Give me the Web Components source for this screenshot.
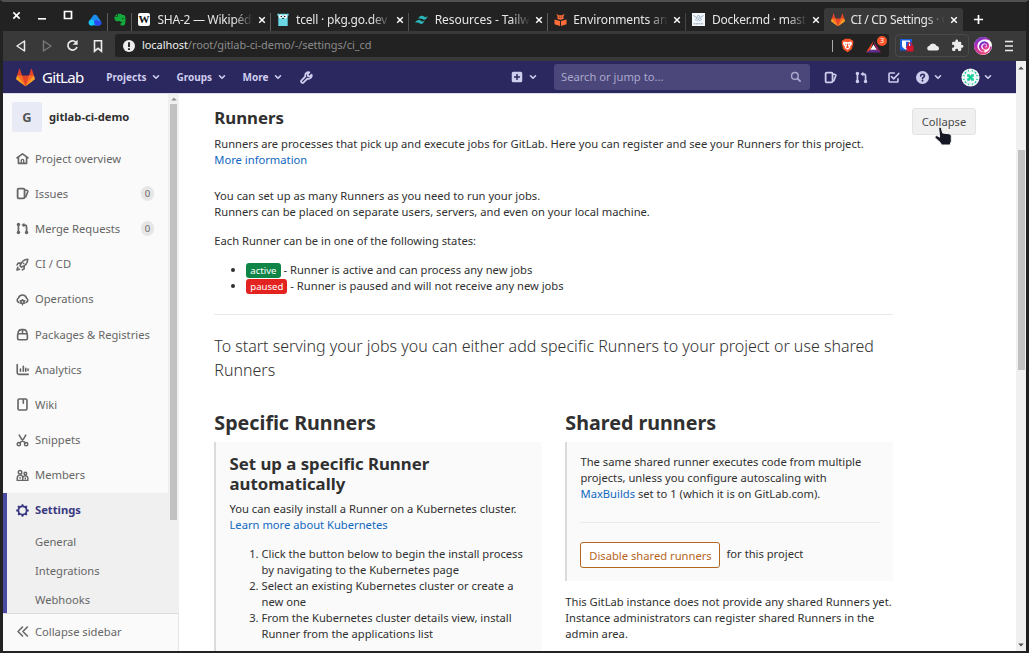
<!DOCTYPE html>
<html lang="en">
<head>
<meta charset="utf-8">
<title>CI / CD Settings · GitLab</title>
<style>
html,body{margin:0;height:100%;overflow:hidden}
body{font:11.2px/16px "Noto Sans",sans-serif;color:#303030;background:#fff}
</style>
</head>
<body>
<app-window></app-window>
<script>
const define = (name, css, html, setup) => {
  const t = document.createElement('template');
  t.innerHTML = `<style>:host,*{box-sizing:border-box}${css}</style>${html}`;
  customElements.define(name, class extends HTMLElement {
    constructor() {
      super();
      this.attachShadow({mode: 'open'}).appendChild(t.content.cloneNode(true));
    }
    connectedCallback() { if (setup) setup(this, this.shadowRoot); }
  });
};

const S = 'fill="none" stroke="currentColor" stroke-linecap="round" stroke-linejoin="round"';
const ICONS = {
  tanuki: ['0 0 36 36', `<path fill="#e24329" d="M2 14l9.38 9v-9l-4-12.28c-.205-.632-1.176-.632-1.38 0z"/><path fill="#e24329" d="M34 14l-9.38 9v-9l4-12.28c.205-.632 1.176-.632 1.38 0z"/><path fill="#e24329" d="M18 34.38 3 14h30z"/><path fill="#fc6d26" d="M18 34.38 11.38 14H2l4 11z"/><path fill="#fc6d26" d="M18 34.38 24.62 14H34l-4 11z"/><path fill="#fca326" d="M2 14L.1 20.16c-.18.565 0 1.2.5 1.56L18 34.38z"/><path fill="#fca326" d="M34 14l1.9 6.16c.18.565 0 1.2-.5 1.56L18 34.38z"/>`],
  chevron: ['0 0 16 16', `<path ${S} stroke-width="2.6" d="M4 6l4 4 4-4"/>`],
  home: ['0 0 16 16', `<path ${S} stroke-width="2" d="M1.2 7.2 8 2.2l6.800 5M3 6.500V14h10V6.500"/><path ${S} stroke-width="1.600" d="M6.500 13.500v-3a1.500 1.500 0 0 1 3 0v3"/>`],
  issues: ['0 0 16 16', `<rect ${S} stroke-width="2.200" x="2" y="2" width="8.500" height="12" rx="1.500"/><path ${S} stroke-width="2" d="M11 3.600l2.800.7a1 1 0 0 1 .8 1.300L12 12.200"/>`],
  merge: ['0 0 16 16', `<g fill="currentColor"><circle cx="3" cy="3" r="2.100"/><circle cx="3" cy="13" r="2.100"/><circle cx="13" cy="13" r="2.100"/><path d="M10.300.8v6L6.800 3.800z"/></g><path ${S} stroke-width="2.100" d="M3 3v10M9.500 3.800H11a2 2 0 0 1 2 2V13"/>`],
  rocket: ['0 0 16 16', `<path ${S} stroke-width="2" d="M5 9.500C6.500 5 10 1.800 14.500 1.600 14.300 6 11 9.800 6.700 11.200zM5.300 6.300H2.700L1.300 8.500M10 10.500v2.800l-2.300 1.300M9.300 6.700l.2-.2M2.200 11.500l-1 3.300 3-1"/>`],
  cloudgear: ['0 0 16 16', `<path ${S} stroke-width="2" d="M3.500 11.500A2.800 2.800 0 0 1 3 6.300 5.100 5.100 0 0 1 12.900 6.300a2.800 2.800 0 0 1-.4 5.200"/><circle ${S} stroke-width="2" cx="8" cy="11" r="2"/><path ${S} stroke-width="1.500" d="M8 7.800v6.900M5 9.300l6 3.400M11 9.300l-6 3.400"/><circle cx="8" cy="11" r=".9" fill="#fafafa"/>`],
  package: ['0 0 16 16', `<rect ${S} stroke-width="2" x="2" y="7" width="12" height="7.500" rx="1.500"/><path ${S} stroke-width="1.900" d="M2.500 7C2.500 4 4.500 2 7 2h2c2.500 0 4.500 2 4.500 5M8 2v4.500"/>`],
  chart: ['0 0 16 16', `<path ${S} stroke-width="2" d="M1.500 2v10a2 2 0 0 0 2 2H15M5.500 7.500V10M9 4v6M12 6.500V10M14.800 7.500V9"/>`],
  wiki: ['0 0 16 16', `<rect ${S} stroke-width="2" x="2.500" y="1.200" width="11" height="13.600" rx="1.600"/><path ${S} stroke-width="2" d="M9 2v4.500"/>`],
  snippets: ['0 0 16 16', `<g ${S} stroke-width="1.900"><circle cx="3.500" cy="12.500" r="2"/><circle cx="12.500" cy="12.500" r="2"/><path d="M4 1.300l3 5.200 4.200 4.500M12 1.300 9 6.500l-4.200 4.500"/></g>`],
  members: ['0 0 16 16', `<g ${S} stroke-width="1.800"><circle cx="5" cy="4" r="2.200"/><circle cx="11.500" cy="5.500" r="1.600"/><path d="M1.500 14v-3a3.500 3.500 0 0 1 6.800-1.200V14zM9 9.800a3 3 0 0 1 5.600 1.200v3H8.500M5 10.500v1M11.500 11v1"/></g>`],
  gear: ['0 0 16 16', `<circle ${S} stroke-width="2.100" cx="8" cy="8" r="5"/><g fill="currentColor">${[0,45,90,135,180,225,270,315].map(a=>`<path transform="rotate(${a} 8 8)" d="M6.400 2.800 6.900.6c.1-.5 2.100-.5 2.200 0l.5 2.200z"/>`).join('')}</g>`],
  collapse: ['0 0 16 16', `<path ${S} stroke-width="2" d="M8 2.500 2.500 8 8 13.500M14 2.500 8.500 8l5.500 5.500"/>`],
  wrench: ['0 0 16 16', `<path ${S} stroke-width="2.200" d="M14.300 4.600a4 4 0 0 1-5.200 4.800L4.500 14a1.800 1.800 0 0 1-2.600-2.600l4.700-4.700a4 4 0 0 1 4.900-5L9.400 4l.5 2.200 2.200.4z"/>`],
  plus: ['0 0 16 16', `<path fill="currentColor" fill-rule="evenodd" d="M3 1h10a2 2 0 0 1 2 2v10a2 2 0 0 1-2 2H3a2 2 0 0 1-2-2V3a2 2 0 0 1 2-2zm4 3v3H4v2h3v3h2V9h3V7H9V4z"/>`],
  search: ['0 0 16 16', `<circle ${S} stroke-width="2" cx="6.800" cy="6.800" r="4.600"/><path ${S} stroke-width="2.400" d="M10.500 10.500 14 14"/>`],
  todo: ['0 0 16 16', `<path ${S} stroke-width="2" d="M9 2.500H3.500a1 1 0 0 0-1 1v9a1 1 0 0 0 1 1h9a1 1 0 0 0 1-1V9.500M5.500 7l2.700 2.700L14.500 3"/>`],
  help: ['0 0 16 16', `<circle cx="8" cy="8" r="8" fill="currentColor"/><path fill="none" stroke="#2b275f" stroke-width="1.900" stroke-linecap="round" d="M5.700 6.200C5.900 3.400 10.400 3.400 10.400 6.200 10.400 8 8 7.900 8 9.400"/><circle cx="8" cy="12" r="1.100" fill="#2b275f"/>`],
  identicon: ['0 0 20 20', `<circle cx="10" cy="10" r="9.500" fill="#f4f6fb"/><g fill="#10cf95"><path d="M6.500 6.500h2.800v1.500h1.400V6.500h2.800v2.800H12v1.400h1.500v2.800h-2.800V12H9.300v1.500H6.500v-2.800H8V9.300H6.500z"/><path d="M3.500 5l2.700-1.500L4.700 6.500zM16.500 5l-2.700-1.500 1.500 3zM3.500 15l2.700 1.500-1.500-3zM16.500 15l-2.700 1.500 1.500-3zM8 1.500l1 2.300H7zM12 1.500l1 2.300h-2zM8 18.500l1-2.300H7zM12 18.500l1-2.300h-2zM1.500 8l2.300-1v2zM1.500 12l2.300-1v2zM18.500 8l-2.300-1v2zM18.500 12l-2.300-1v2z"/></g>`],
  drive: ['0 0 14 12', `<path fill="#1a8cf0" d="M7 .8c1 0 1.800.5 2.300 1.300l3.800 5.500a2.800 2.800 0 0 1-2.400 3.900H3.300A2.800 2.800 0 0 1 .9 7.600l3.800-5.500C5.200 1.300 6 .8 7 .8z"/><circle cx="3.600" cy="8.600" r="2.900" fill="#14c8f5"/><path fill="#2a49f5" d="M6 8.500a2.300 2.300 0 0 1 4-1.800l3 .8a2.700 2.700 0 0 1-2.300 4H8z"/>`],
  evernote: ['0 0 12 13', `<path fill="#12a83a" d="M4 .8h3l1 .9 2.500.5c.8.200 1 2 1 4.500 0 3.300-.5 5.500-1.700 5.900H7.700c-1 0-1.500-.9-1.300-1.800.1-.7.700-1 1.300-.9V8.800c-.8.100-1.700 0-2-.8-1.600.6-3.600.4-4.400-.6C.6 6.400.3 5 .3 4h3.200z"/><path fill="#12a83a" d="M.5 3.400 3.200.8v2.600z"/><circle cx="8.700" cy="5.600" r=".7" fill="#222"/>`],
  tailwind: ['0 0 16 12', `<path fill="#2ab5b8" d="M4 4.700Q5.500.3 9 .8c2 .3 2.800 2.300 4.500 1.800L15.800 1.200Q14 6 11 5.700C9 5.500 8 3 4 4.700zM.2 9.800Q1.700 5.400 5.200 5.900c2 .3 2.800 2.300 4.500 1.800L12 6.300Q10.200 11.100 7.200 10.800C5.200 10.600 4.200 8.100.2 9.800z"/>`],
  gopher: ['0 0 12 13', `<path fill="#6ad7e5" d="M1.300 3Q1.300.8 4 .8h4Q10.700.8 10.700 3v10H1.300z"/><circle cx="1.500" cy="1.700" r="1.200" fill="#6ad7e5"/><circle cx="10.500" cy="1.700" r="1.200" fill="#6ad7e5"/><circle cx="3.800" cy="3.500" r="2" fill="#fff"/><circle cx="8.200" cy="3.500" r="2" fill="#fff"/><circle cx="4.300" cy="3.500" r=".8" fill="#222"/><circle cx="7.700" cy="3.500" r=".8" fill="#222"/><path fill="#222" d="M5.200 5h1.600v1H5.200z"/>`],
  reader: ['0 0 13 13', `<path fill="#ff6c37" d="M.5 6.500 6 8v5L.5 11.300zM12.500 6.500 7 8v5l5.500-1.700zM3.500 5.900V3.300L2.300.8l2.400 1.500h3.600L10.700.8 9.500 3.300v2.600l-3 .9z"/><path stroke="#222" d="M5 4.200h.8M7.200 4.200H8"/>`],
  doc: ['0 0 13 13', `<path fill="#f4f7fa" d="M0 0h13v13H0z"/><path fill="none" stroke="#7d9db8" stroke-width=".8" d="M1.500 2.500l3 2 2-2.500 2 2.500 3-2M3 7l2.500-2h2L10 7M4.500 8 6 6.500 8.500 8"/><path stroke="#8fa4b8" stroke-dasharray="2 .5" d="M1.500 10.800h10"/>`],
  xmark: ['0 0 10 10', `<path fill="none" stroke="currentColor" stroke-width="1.800" d="M1.500 1.500l7 7M8.500 1.500l-7 7"/>`],
  add: ['0 0 12 12', `<path stroke="currentColor" stroke-width="1.900" d="M6 1v10M1 6h10"/>`],
  min: ['0 0 10 10', `<path stroke="currentColor" stroke-width="1.600" d="M1 8.800h8"/>`],
  max: ['0 0 10 10', `<path fill="none" stroke="currentColor" stroke-width="1.700" d="M1.500 1.500h7v7h-7z"/>`],
  back: ['0 0 12 14', `<path ${S} stroke-width="1.500" d="M9.500 2v10L2 7z"/>`],
  forward: ['0 0 12 14', `<path ${S} stroke-width="1.500" d="M2.500 2v10L10 7z"/>`],
  reload: ['0 0 14 14', `<path fill="none" stroke="currentColor" stroke-width="1.800" d="M11.800 8.500A5 5 0 1 1 10.500 3.300"/><path fill="currentColor" d="M12.500.8v5.400H7.200z"/>`],
  bookmark: ['0 0 12 14', `<path fill="none" stroke="currentColor" stroke-width="1.600" d="M2.500 1.800h7v10.400L6 9.300l-3.500 2.900z"/>`],
  info: ['0 0 12 12', `<circle cx="6" cy="6" r="6" fill="currentColor"/><path stroke="#222" stroke-width="1.900" d="M6 2.200V7M6 8.200v1.900"/>`],
  brave: ['0 0 14 16', `<path fill="#fb542b" d="M4 .7h6l1.200 1.400 1.500.2.700 2.200-.4 1 .2 1-1.700 5.500L7 15.400 2.500 12 .8 6.500l.2-1-.4-1 .7-2.200 1.500-.2z"/><path fill="#fff" d="M3 3.800l4 .7 4-.7 1 2.200-2.200 3L10 10.500 7 12.700 4 10.500 4.200 9 2 6z"/><path fill="#fb542b" d="M4 5.800l2 .5-.7 1.200zM10 5.800l-2 .5.700 1.200zM6.300 6h1.400L7.500 8.500 9 9.800 7 11 5 9.800l1.500-1.300z"/>`],
  bat: ['0 0 15 13', `<path fill="#ff4724" d="M7.500.8 0 12.500l4.500-2.800z"/><path fill="#9e1f63" d="M7.500.8 15 12.500l-4.500-2.800z"/><path fill="#662d91" d="M0 12.500h15l-4.500-2.800h-6z"/><path fill="#fff" d="M7.500 4.500l3.200 5.300H4.300z"/>`],
  bitwarden: ['0 0 14 13', `<path fill="#175ddc" d="M0 0h12v11.500H0z"/><path fill="#fff" d="M2 1.500h8v5c0 2-2 3.200-4 4.200-2-1-4-2.200-4-4.200z"/><path fill="#175ddc" d="M6 2.800h2.800v3.500C8.800 7.800 7.500 8.500 6 9.300z"/><rect x="6.500" y="6.800" width="7" height="5.700" rx=".8" fill="#d7142d"/><path fill="none" stroke="#d7142d" stroke-width="1.200" d="M8.200 7V5.600a1.800 1.800 0 0 1 3.600 0V7"/>`],
  cloud: ['0 0 14 12', `<path fill="#ececec" d="M2.600 10.500a2.300 2.300 0 0 1 .6-4.400A4 4 0 0 1 10.700 6a2.300 2.300 0 0 1 .7 4.500z"/>`],
  puzzle: ['0 0 24 24', `<path fill="#ececec" d="M20.500 11H19V7a2 2 0 0 0-2-2h-4V3.500a2.500 2.500 0 0 0-5 0V5H4a2 2 0 0 0-2 2v3.800h1.500a2.700 2.700 0 0 1 0 5.400H2V20a2 2 0 0 0 2 2h3.800v-1.500a2.700 2.700 0 0 1 5.400 0V22H17a2 2 0 0 0 2-2v-4h1.500a2.500 2.500 0 0 0 0-5z"/>`],
  swirl: ['0 0 18 18', `<defs><linearGradient id="g" x2=".5" y2="1"><stop stop-color="#5238cc"/><stop offset=".5" stop-color="#b62bb5"/><stop offset="1" stop-color="#f04a7c"/></linearGradient></defs><circle cx="9" cy="9" r="9" fill="#fff"/><path fill="url(#g)" d="M9 0a9 9 0 0 1 7.500 4C12.500 1.300 5 2 3.600 7.500 2.400 13 8 16.500 12.500 14.500 9 17.500 3.500 16.500 1.200 13.400A9 9 0 0 1 9 0z"/><path fill="none" stroke="url(#g)" stroke-width="2.200" stroke-linecap="round" d="M11.500 8.600c-1.600-.8-2.800 1.300-1.100 2.400 2 1.100 4.400-.7 3.700-3-.8-2.700-4.700-3.600-6.900-1.300-2.200 2.600-1 6.300 2.300 7.100"/><path fill="none" stroke="url(#g)" stroke-width="1.600" d="M3.500 15.200C8.500 18.800 16 16 17 9.500"/>`],
  menu: ['0 0 10 12', `<path stroke="currentColor" stroke-width="1.300" d="M1 1.500h8M1 6h8M1 10.500h8"/>`],
  pointer: ['0 0 19 20', `<path fill="#151824" stroke="#f5f5f5" stroke-width="1" stroke-linejoin="round" d="M4.700 1.800C5.300.9 7 1 7.400 2.200L8.600 7l6.200.8c1.700.3 2.600 1.300 2.500 3v4.500L16 19H7.400l-.9-2.200L1 11.700C.6 10.300 2.400 9.200 3.700 10l1.900 1.200z"/>`],
  up: ['0 0 6 4', `<path fill="currentColor" d="M3 .5 5.800 3.500H.2z"/>`],
  down: ['0 0 6 4', `<path fill="currentColor" d="M3 3.500 5.800.5H.2z"/>`]
};

define('ui-icon', ':host{display:block;flex:none}svg{display:block;width:100%;height:100%}', '<svg></svg>', (el, r) => {
  const [box, body] = ICONS[el.getAttribute('name')] || ['0 0 1 1', ''];
  const [w, h] = (el.getAttribute('size') || '13').split('x');
  el.style.width = w + 'px';
  el.style.height = (h || w) + 'px';
  const s = r.querySelector('svg');
  s.setAttribute('viewBox', box);
  s.innerHTML = body;
});

/* ---------- browser chrome ---------- */
define('browser-tab', `
:host{display:flex;align-items:center;width:138.600px;flex:none;height:23px;padding-left:6px;border-left:1px solid #5c5c5c;clip-path:inset(5px 0 0 0);color:#e6e6e6}
:host([active]){background:#393939;border-color:#393939;border-radius:3px 3px 0 0;clip-path:none}
.fav{width:19.500px;flex:none}
.t{width:96px;flex:none;white-space:nowrap;overflow:hidden;font-size:12px;line-height:18px;-webkit-mask-image:linear-gradient(90deg,#000 76px,transparent 95px);mask-image:linear-gradient(90deg,#000 76px,transparent 95px)}
.x{margin-left:4px;color:#fff}`,
`<span class="fav"><slot name="icon"></slot></span><span class="t"><slot></slot></span><ui-icon class="x" name="xmark" size="8"></ui-icon>`,
(el, r) => { const s = el.getAttribute('spacing'); if (s) r.querySelector('.t').style.letterSpacing = s + 'px'; });

define('tab-strip', `
:host{display:flex;height:29px;align-items:flex-end;background:#222;color:#fff;flex:none}
.ctl{display:flex;align-items:center;height:28px;width:85px;padding:0 0 4px 9px;gap:16px}
.pin{display:flex;align-items:center;height:23px;clip-path:inset(5px 0 0 0)}
.pin.b{border-left:1px solid #5c5c5c;width:24px;padding-left:6px}
.pin.a{width:19px}
.plus{margin:0 0 6px 10px}`,
`<div class="ctl"><ui-icon name="xmark" size="9"></ui-icon><ui-icon name="min" size="10"></ui-icon><ui-icon name="max" size="10"></ui-icon></div>
<div class="pin a"><ui-icon name="drive" size="14x12"></ui-icon></div>
<div class="pin b"><ui-icon name="evernote" size="12x13"></ui-icon></div>
<browser-tab spacing="-0.25"><wiki-mark slot="icon"></wiki-mark>SHA-2 — Wikipédia</browser-tab>
<browser-tab spacing="-0.2"><ui-icon slot="icon" name="gopher" size="12x13"></ui-icon>tcell · pkg.go.dev</browser-tab>
<browser-tab spacing="-0.05"><ui-icon slot="icon" name="tailwind" size="13x10"></ui-icon>Resources - Tailwind</browser-tab>
<browser-tab spacing="-0.1"><ui-icon slot="icon" name="reader" size="13"></ui-icon>Environments and</browser-tab>
<browser-tab spacing="-0.2"><ui-icon slot="icon" name="doc" size="13"></ui-icon>Docker.md · master</browser-tab>
<browser-tab spacing="-0.3" active><ui-icon slot="icon" name="tanuki" size="14"></ui-icon>CI / CD Settings · GitLab</browser-tab>
<ui-icon class="plus" name="add" size="11"></ui-icon>`);

define('wiki-mark', `:host{display:block;width:12px;height:13px;border-radius:2px;background:#fff;color:#111;font:bold 11px/13px "Liberation Serif",serif;overflow:hidden}span{margin-left:.5px}`, '<span>W</span>');

define('tool-bar', `
:host{display:flex;align-items:center;height:30px;background:#393939;color:#ededed;flex:none;padding:0 11px 1px 12px}
.nav{display:flex;align-items:center;width:100px;gap:14px}
.url{display:flex;align-items:center;width:774px;height:23px;border-radius:3px;background:#222;padding:0 1px 0 8px}
.addr{margin-left:7px;flex:1;font-size:11px;line-height:18px;color:#8b8b8b;white-space:nowrap;letter-spacing:-.07px;padding-bottom:1px}
.addr b{font-weight:400;color:#f0f0f0}
.sep{width:1px;height:12px;background:#aaa;margin-right:8px}
.bat{position:relative;margin-left:12px;width:22px;height:15px;padding-top:2px}
.n{position:absolute;right:1px;top:-2px;width:10px;height:10px;border-radius:5px;background:#fb542b;color:#fff;font-size:7px;line-height:10px;text-align:center}
.ext{display:flex;align-items:center;justify-content:space-between;width:74px;height:23px;border:1px solid #4a4a4a;border-radius:4px;margin:0 5px 0 6px;padding:0 4px 0 4px}
.menu{margin-left:12px}`,
`<div class="nav"><ui-icon name="back" size="12x14"></ui-icon><ui-icon name="forward" size="12x14" style="color:#777"></ui-icon><ui-icon name="reload" size="13" style="margin-left:-1px"></ui-icon><ui-icon name="bookmark" size="12x14" style="margin-left:-1px"></ui-icon></div>
<div class="url"><ui-icon name="info" size="12"></ui-icon><span class="addr"><b>localhost</b>/root/gitlab-ci-demo/-/settings/ci_cd</span><i class="sep"></i><ui-icon name="brave" size="13x15"></ui-icon><span class="bat"><ui-icon name="bat" size="15x13"></ui-icon><span class="n">3</span></span></div>
<div class="ext"><ui-icon name="bitwarden" size="14x13"></ui-icon><ui-icon name="cloud" size="14x12"></ui-icon><ui-icon name="puzzle" size="13"></ui-icon></div>
<ui-icon name="swirl" size="18"></ui-icon><ui-icon class="menu" name="menu" size="10x12"></ui-icon>`);

/* ---------- GitLab header ---------- */
define('gl-header', `
:host{display:flex;align-items:center;height:33px;flex:none;background:#2b275f;border-bottom:1px solid #dcdcec;color:#cfcdee;padding:0 16px 0 13px}
.brand{font-size:15px;line-height:20px;color:#fff;margin-left:7px;width:64.300px;flex:none;letter-spacing:-.7px}
.item{display:flex;flex:none;align-items:center;font-weight:700;font-size:10px}
.item ui-icon{margin-left:4.500px}
.search{display:flex;flex:none;align-items:center;justify-content:space-between;width:256px;height:26px;border-radius:3px;background:#4b477a;color:#aaa8cc;padding:0 8px 0 7px;font-size:11.200px}`,
`<ui-icon name="tanuki" size="19"></ui-icon><span class="brand">GitLab</span>
<span class="item" style="width:70.200px"><span>Projects</span><ui-icon name="chevron" size="10"></ui-icon></span>
<span class="item" style="width:66px"><span>Groups</span><ui-icon name="chevron" size="10"></ui-icon></span>
<span class="item" style="width:57.500px"><span>More</span><ui-icon name="chevron" size="10"></ui-icon></span>
<ui-icon name="wrench" size="13"></ui-icon>
<ui-icon name="plus" size="12" style="margin-left:198px"></ui-icon><ui-icon name="chevron" size="10" style="margin-left:5px"></ui-icon>
<div class="search" style="margin-left:16px"><span>Search or jump to...</span><ui-icon name="search" size="11.500"></ui-icon></div>
<ui-icon name="issues" size="13" style="margin-left:14px"></ui-icon>
<ui-icon name="merge" size="13" style="margin-left:18px"></ui-icon>
<ui-icon name="todo" size="13" style="margin-left:19px"></ui-icon>
<ui-icon name="help" size="13" style="margin-left:16px"></ui-icon><ui-icon name="chevron" size="10" style="margin-left:4px"></ui-icon>
<ui-icon name="identicon" size="19" style="margin-left:18px"></ui-icon><ui-icon name="chevron" size="10" style="margin-left:3.500px"></ui-icon>`);

/* ---------- sidebar ---------- */
define('nav-item', `
:host{display:flex;align-items:center;height:35.200px;padding:0 14px 0 13px;color:#666}
.l{margin-left:6px;flex:1;white-space:nowrap}
.badge{width:13px;height:15px;border-radius:7px;background:#e6e6e6;font-size:9.600px;line-height:15px;text-align:center;color:#666}
:host([active]){color:#393982;font-weight:700;padding-left:9px}
[hidden]{display:none}`,
`<ui-icon></ui-icon><span class="l"><slot></slot></span><span class="badge" hidden></span>`,
(el, r) => {
  const i = document.createElement('ui-icon');
  i.setAttribute('name', el.getAttribute('icon'));
  i.setAttribute('size', '13');
  r.querySelector('ui-icon').replaceWith(i);
  const c = el.getAttribute('count');
  if (c !== null) { const b = r.querySelector('.badge'); b.textContent = c; b.hidden = false; }
});

define('side-bar', `
:host{display:flex;flex-direction:column;width:176px;flex:none;background:#fafafa;height:557px}
.scroll{display:flex;height:519px;overflow:hidden}
.list{flex:1;min-width:0;padding-top:7px}
.proj{display:flex;align-items:center;height:31px;padding-left:9px;font-weight:700;margin-bottom:9px}
.proj i{font-style:normal;width:30px;height:30px;border-radius:2px;background:#e8eaf6;color:#555;text-align:center;line-height:30px;font-size:12.800px;margin-right:7px}
.bar{width:11px;background:#f0f0f0;display:flex;flex-direction:column;align-items:center;padding-top:3px;color:#8e8e8e}
.thumb{width:7px;height:416px;background:#c1c1c1;margin-top:3px}
.open{background:#f0f0f0;border-left:4px solid #4b4ba3;height:121px}
.sub{height:29px;line-height:29px;padding-left:28px;color:#666}
.sub:nth-child(2){margin-top:-1.500px}
.foot{display:flex;align-items:center;height:38px;border-top:1px solid #dbdbdb;border-right:1px solid #e5e5e5;padding:0 0 2px 13px;color:#666}
.foot span{margin-left:6px}`,
`<div class="scroll"><div class="list">
<div class="proj"><i>G</i><span>gitlab-ci-demo</span></div>
<nav-item icon="home">Project overview</nav-item>
<nav-item icon="issues" count="0">Issues</nav-item>
<nav-item icon="merge" count="0">Merge Requests</nav-item>
<nav-item icon="rocket">CI / CD</nav-item>
<nav-item icon="cloudgear">Operations</nav-item>
<nav-item icon="package">Packages &amp; Registries</nav-item>
<nav-item icon="chart">Analytics</nav-item>
<nav-item icon="wiki">Wiki</nav-item>
<nav-item icon="snippets">Snippets</nav-item>
<nav-item icon="members">Members</nav-item>
<div class="open"><nav-item icon="gear" active>Settings</nav-item>
<div class="sub">General</div><div class="sub">Integrations</div><div class="sub">Webhooks</div></div>
</div><div class="bar"><ui-icon name="up" size="6x4"></ui-icon><div class="thumb"></div></div></div>
<div class="foot"><ui-icon name="collapse" size="13"></ui-icon><span>Collapse sidebar</span></div>`);

/* ---------- page content ---------- */
define('state-badge', `:host{display:inline-block;height:15px;border-radius:3px;padding:0 4px;background:#108548;color:#fff;font-size:9.600px;line-height:15px;vertical-align:baseline}:host([kind=paused]){background:#e2231f}`, '<slot></slot>');

define('runner-panel', `:host{display:block;background:#fafafa;border-left:2px solid #dbdbdb;padding:12px 13px 13px 13.200px}`, '<slot></slot>');

define('runner-settings', `
:host{display:flex;flex:1;min-width:0;height:557px;overflow:hidden;padding:14px 40px 0 35.300px;justify-content:space-between;align-items:flex-start}
.main{width:679px;flex:none}
h2,h3,h4,p,ul,ol{margin:0}
h4{font-size:16.800px;line-height:20px;font-weight:700}
h3{font-size:19.700px;line-height:24px;font-weight:700;margin-bottom:7px}
a{color:#1068bf;text-decoration:none}
ul,ol{padding-left:32px}
ul li{height:16px}
.lead{font-size:16px;line-height:24px;font-weight:300;margin-bottom:29px}
hr{border:0;border-top:1px solid #eaeaea;margin:20px 0 19px}
.cols{display:grid;grid-template-columns:328px 328px;column-gap:23px}
.btn{position:relative;width:64px;height:27px;border:1px solid #e3e3e3;border-radius:3px;background:#f0f0f0;color:#4a4a4a;text-align:center;line-height:26px;flex:none}
.cur{position:absolute;left:21px;top:17px}
.act{display:flex;align-items:flex-start;gap:6px}
.warn{width:140px;height:26px;border:1px solid #b5651d;border-radius:3px;background:#fff;color:#b5651d;text-align:center;line-height:26px}
.act span{line-height:24px}`,
`<div class="main">
<h4 style="margin-bottom:8px">Runners</h4>
<p>Runners are processes that pick up and execute jobs for GitLab. Here you can register and see your Runners for this project.<br><a>More information</a></p>
<p style="margin-top:20px">You can set up as many Runners as you need to run your jobs.<br>Runners can be placed on separate users, servers, and even on your local machine.</p>
<p style="margin:13px 0">Each Runner can be in one of the following states:</p>
<ul><li><state-badge>active</state-badge> - Runner is active and can process any new jobs</li><li><state-badge kind="paused">paused</state-badge> - Runner is paused and will not receive any new jobs</li></ul>
<hr>
<p class="lead">To start serving your jobs you can either add specific Runners to your project or use shared Runners</p>
<div class="cols">
<div><h3>Specific Runners</h3><runner-panel style="height:240px">
<h4 style="margin-bottom:7px">Set up a specific Runner automatically</h4>
<p style="margin-bottom:13px">You can easily install a Runner on a Kubernetes cluster. <a>Learn more about Kubernetes</a></p>
<ol><li>Click the button below to begin the install process by navigating to the Kubernetes page</li><li>Select an existing Kubernetes cluster or create a new one</li><li>From the Kubernetes cluster details view, install Runner from the applications list</li></ol>
</runner-panel></div>
<div><h3>Shared runners</h3><runner-panel>
<p>The same shared runner executes code from multiple projects, unless you configure autoscaling with <a>MaxBuilds</a> set to 1 (which it is on GitLab.com).</p>
<hr>
<div class="act"><div class="warn">Disable shared runners</div><span>for this project</span></div>
</runner-panel>
<p style="margin-top:13px">This GitLab instance does not provide any shared Runners yet. Instance administrators can register shared Runners in the admin area.</p></div>
</div></div>
<div class="btn">Collapse<ui-icon class="cur" name="pointer" size="19x20"></ui-icon></div>`);

define('page-scrollbar', `
:host{display:flex;flex-direction:column;align-items:center;width:10px;flex:none;background:#f0f0f0;color:#505050;padding:5px 0 4px}
.thumb{width:7px;height:220px;background:#c1c1c1;margin-top:80px}
.d{margin-top:auto}`,
`<ui-icon name="up" size="6x4"></ui-icon><div class="thumb"></div><ui-icon class="d" name="down" size="6x4"></ui-icon>`);

define('app-window', `
:host{display:flex;flex-direction:column;width:1029px;height:653px;background:#222;border-top:2px solid #505050;border-left:3px solid #222;border-right:3px solid #1d1f20;border-bottom:2px solid #232323}
.view{display:flex;height:590px;background:#fff}
.col{flex:1;min-width:0;display:flex;flex-direction:column}
.body{display:flex}`,
`<tab-strip></tab-strip><tool-bar></tool-bar>
<div class="view"><div class="col"><gl-header></gl-header><div class="body"><side-bar></side-bar><runner-settings></runner-settings></div></div><page-scrollbar></page-scrollbar></div>`);
</script>
</body>
</html>
